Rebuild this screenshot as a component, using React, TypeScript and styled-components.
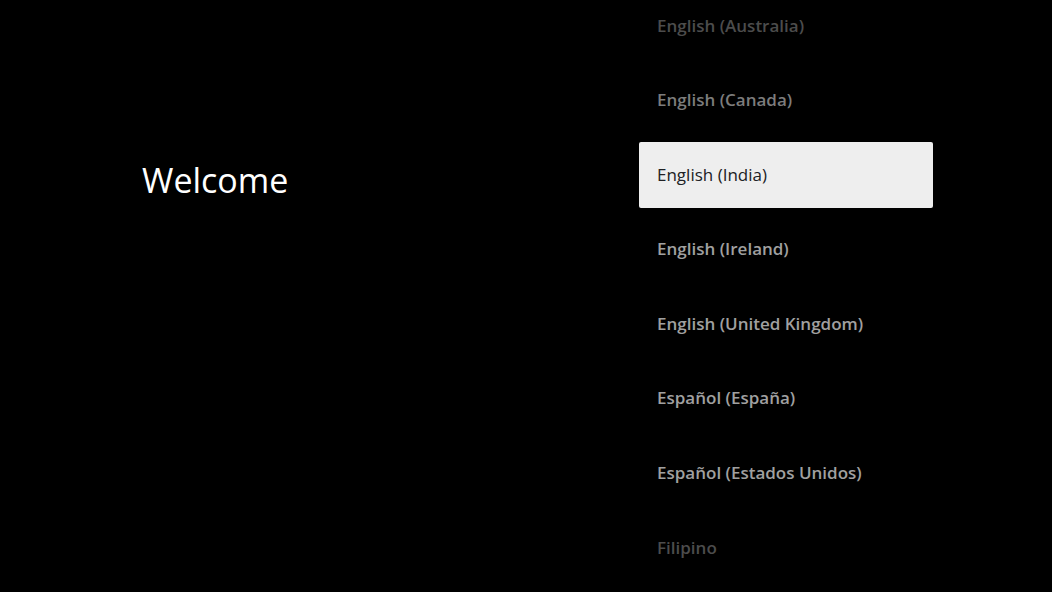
import React from 'react';
import styled, { createGlobalStyle } from 'styled-components';

const GlobalStyle = createGlobalStyle`
  html, body {
    margin: 0;
    padding: 0;
    background: #000000;
    overflow: hidden;
  }
  #root {
    height: 592px;
  }
`;

type Tone = 'faded' | 'dim' | 'normal';

const languages: { label: string; tone: Tone; selected?: boolean }[] = [
  { label: 'English (Australia)', tone: 'faded' },
  { label: 'English (Canada)', tone: 'dim' },
  { label: 'English (India)', tone: 'normal', selected: true },
  { label: 'English (Ireland)', tone: 'normal' },
  { label: 'English (United Kingdom)', tone: 'normal' },
  { label: 'Español (España)', tone: 'normal' },
  { label: 'Español (Estados Unidos)', tone: 'normal' },
  { label: 'Filipino', tone: 'faded' },
];

const toneColor: Record<Tone, string> = {
  faded: '#4c4c4c',
  dim: '#7c7c7c',
  normal: '#a0a0a0',
};

export default function App() {
  return (
    <>
      <GlobalStyle />
      <StyledScreen>
        <StyledTitlePane>
          <h1 className="welcome-text">Welcome</h1>
        </StyledTitlePane>
        <StyledLanguageList>
          {languages.map((lang) => (
            <StyledLanguageItem
              key={lang.label}
              $selected={!!lang.selected}
              $tone={lang.tone}
            >
              {lang.label}
            </StyledLanguageItem>
          ))}
        </StyledLanguageList>
      </StyledScreen>
    </>
  );
}

const StyledScreen = styled.div`
  display: flex;
  flex-direction: row;
  width: 1052px;
  height: 592px;
  background-color: #000000;
  overflow: hidden;
`;

const StyledTitlePane = styled.div`
  width: 639px;
  padding: 0 0 0 142px;
  box-sizing: border-box;

  .welcome-text {
    margin: 156px 0 0 0;
    color: #ffffff;
    font-family: 'Open Sans', 'Liberation Sans', sans-serif;
    font-weight: 400;
    font-size: 34px;
    letter-spacing: 0;
    line-height: 48px;
  }
`;

const StyledLanguageList = styled.div`
  display: flex;
  flex-direction: column;
  gap: 8.6px;
  width: 294px;
  margin-top: -7px; /* list is scrolled a little */
`;

const StyledLanguageItem = styled.div<{ $selected: boolean; $tone: Tone }>`
  display: flex;
  align-items: center;
  flex-shrink: 0;
  box-sizing: border-box;
  height: 66px;
  padding: 0 18px 2px 18px;
  border-radius: 2px;
  font-family: 'Open Sans', 'Liberation Sans', sans-serif;
  font-size: 17px;
  font-weight: ${(p) => (p.$selected ? 500 : 600)};
  letter-spacing: 0;
  background-color: ${(p) => (p.$selected ? '#eeeeee' : 'transparent')};
  color: ${(p) => (p.$selected ? '#202124' : toneColor[p.$tone])};
`;
